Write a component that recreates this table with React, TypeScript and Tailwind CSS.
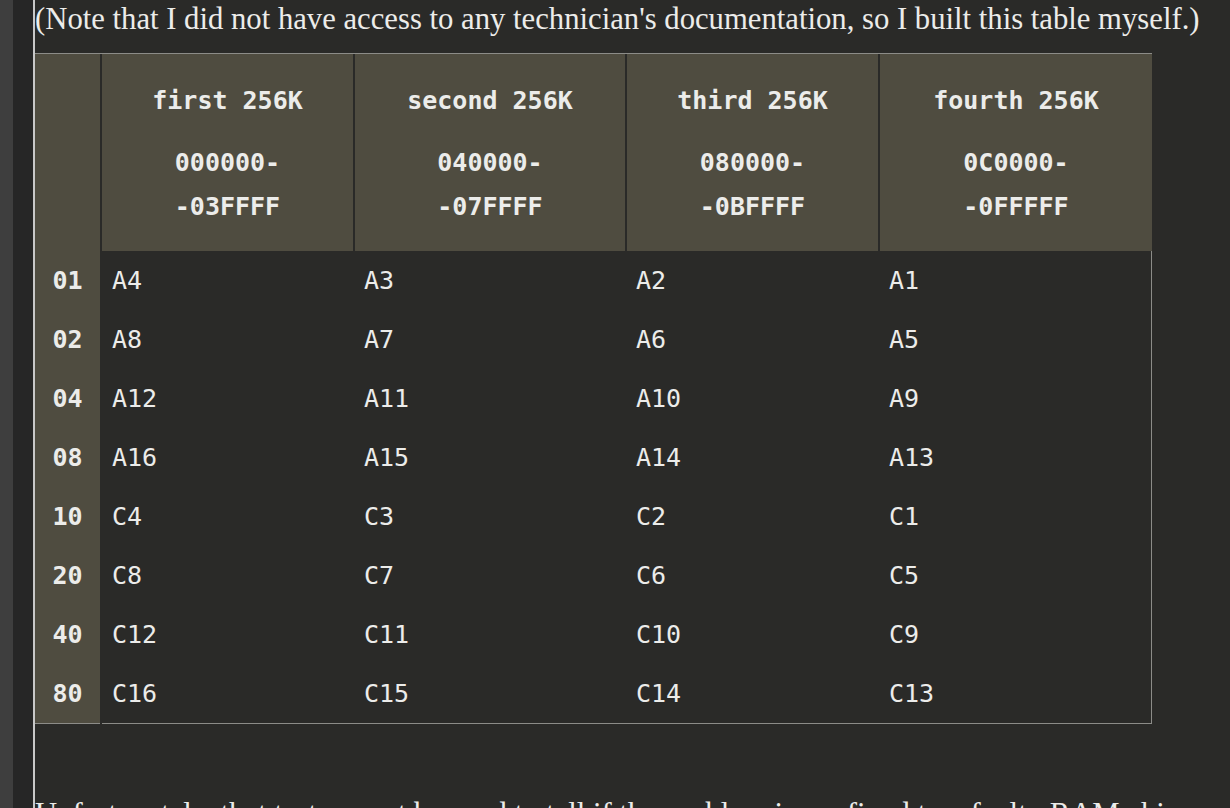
import React from 'react';

const heads = [
  { title: 'first 256K', from: '000000-', to: '-03FFFF', w: 'w-[251px]' },
  { title: 'second 256K', from: '040000-', to: '-07FFFF', w: 'w-[270px]' },
  { title: 'third 256K', from: '080000-', to: '-0BFFFF', w: 'w-[251px]' },
  { title: 'fourth 256K', from: '0C0000-', to: '-0FFFFF', w: 'w-[272px]' },
];

const rows = [
  ['01', 'A4', 'A3', 'A2', 'A1'],
  ['02', 'A8', 'A7', 'A6', 'A5'],
  ['04', 'A12', 'A11', 'A10', 'A9'],
  ['08', 'A16', 'A15', 'A14', 'A13'],
  ['10', 'C4', 'C3', 'C2', 'C1'],
  ['20', 'C8', 'C7', 'C6', 'C5'],
  ['40', 'C12', 'C11', 'C10', 'C9'],
  ['80', 'C16', 'C15', 'C14', 'C13'],
];

const mono = "font-['DejaVu_Sans_Mono',monospace]";
const serif = "font-['Liberation_Serif',serif]";

function ChipTable() {
  return (
    <div className={`w-[1117px] border-t border-[#8c8c88] ${mono} text-[25px] text-[#ececea]`}>
      <div className="flex">
        <div className="flex w-[65px] shrink-0 flex-col bg-[#4f4c40]">
          <div className="h-[197px]" />
          {rows.map((r) => (
            <div key={r[0]} className="flex h-[59px] items-center justify-center font-bold">
              {r[0]}
            </div>
          ))}
        </div>
        <div className="ml-[2px] flex flex-col">
          <div className="flex h-[197px] gap-[2px]">
            {heads.map((h) => (
              <div key={h.title} className={`${h.w} flex flex-col items-center bg-[#4f4c40] pt-[25px] font-bold`}>
                <div className="leading-[44px]">{h.title}</div>
                <div className="mt-[18px] leading-[44px]">{h.from}</div>
                <div className="leading-[44px]">{h.to}</div>
              </div>
            ))}
          </div>
          <div className="w-[1050px] border-r border-[#8c8c88]">
            {rows.map((r) => (
              <div key={r[0]} className="flex h-[59px] items-center">
                <div className="w-[253px] pl-[10px]">{r[1]}</div>
                <div className="w-[272px] pl-[9px]">{r[2]}</div>
                <div className="w-[253px] pl-[9px]">{r[3]}</div>
                <div className="pl-[9px]">{r[4]}</div>
              </div>
            ))}
          </div>
        </div>
      </div>
      <div className="flex">
        <div className="h-px w-[65px] bg-[#8c8c88]" />
        <div className="ml-[2px] h-px w-[1050px] bg-[#8c8c88]" />
      </div>
    </div>
  );
}

export default function App() {
  return (
    <div className="flex h-[808px] w-full overflow-hidden bg-[#2a2a28]">
      <div className="w-[13px] shrink-0 bg-[#3e3e3e]" />
      <div className="w-[20px] shrink-0 bg-[#262626]" />
      <div className="flex-1 border-l-2 border-[#c8c8c8]">
        <p className={`${serif} whitespace-nowrap pt-px text-[30.7px] leading-[37px] text-[#ececea]`}>
          (Note that I did not have access to any technician's documentation, so I built this table myself.)
        </p>
        <div className="mt-[15px]">
          <ChipTable />
        </div>
        <p className={`${serif} mt-[71px] whitespace-nowrap text-[30.7px] leading-[38px] text-[#ececea]`}>
          Unfortunately, that test cannot be used to tell if the problem is confined to a faulty RAM chip, or
        </p>
      </div>
    </div>
  );
}
